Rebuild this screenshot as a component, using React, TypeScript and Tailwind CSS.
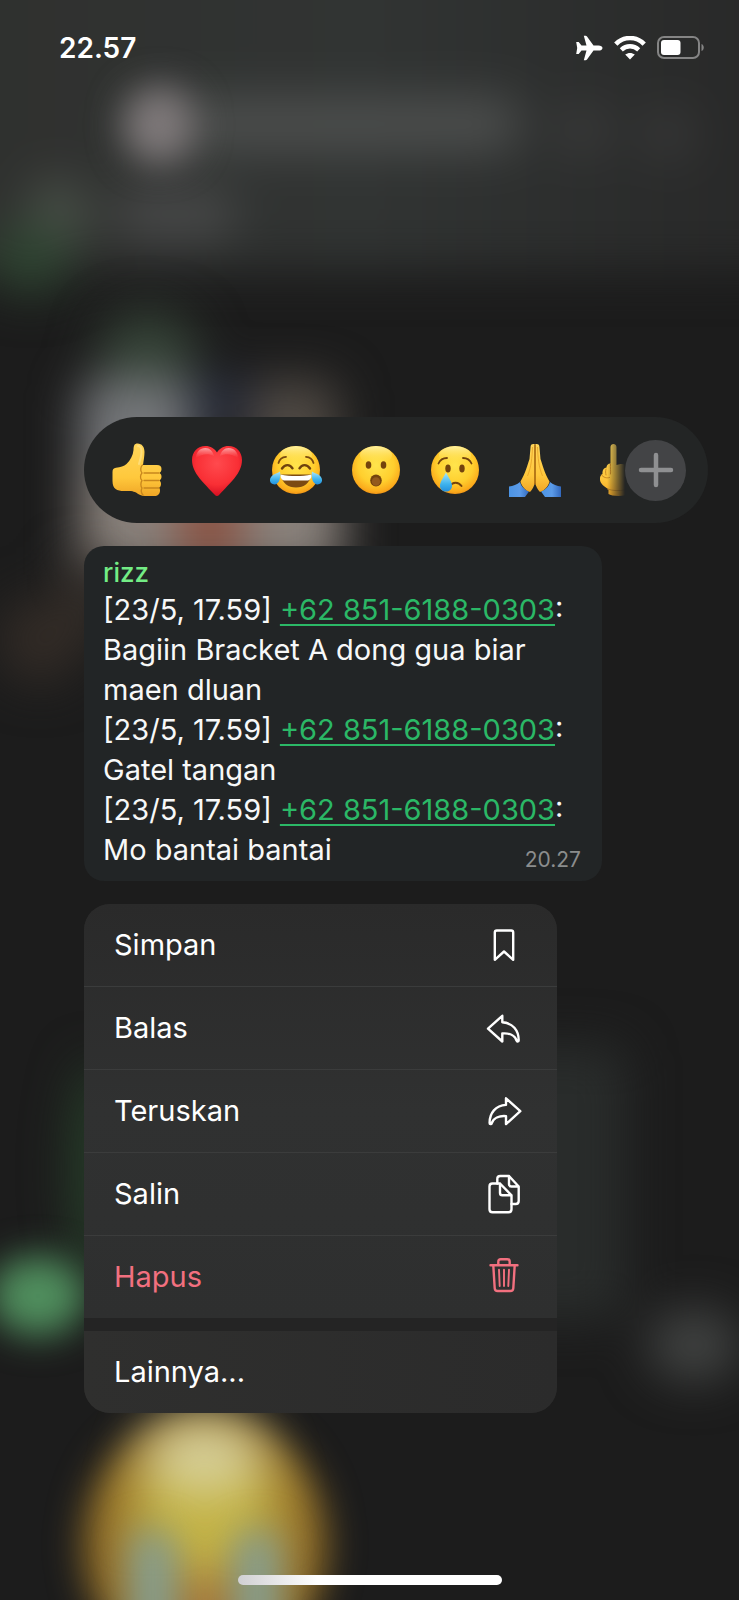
import React from "react";

type IconProps = { children: React.ReactNode };

function Backdrop() {
  return (
    <svg
      aria-hidden="true"
      className="absolute inset-0 -z-10 h-full w-full"
      viewBox="0 0 739 1600"
      preserveAspectRatio="xMidYMin slice"
    >
      <defs>
        <linearGradient id="header" x1="0" x2="1" y1="0" y2="0">
          <stop offset="0" stopColor="#2f302e" />
          <stop offset="0.5" stopColor="#313433" />
          <stop offset="1" stopColor="#272727" />
        </linearGradient>
        <filter id="soft" x="-150%" y="-150%" width="400%" height="400%" colorInterpolationFilters="sRGB">
          <feGaussianBlur stdDeviation="18" />
        </filter>
        <filter id="softer" x="-150%" y="-150%" width="400%" height="400%" colorInterpolationFilters="sRGB">
          <feGaussianBlur stdDeviation="24" />
        </filter>
      </defs>
      <rect width="739" height="1600" fill="#1c1c1c" />
      <g filter="url(#softer)">
        <rect x="-80" y="-80" width="900" height="350" fill="url(#header)" />
        <rect x="130" y="98" width="390" height="52" rx="20" fill="#4e504f" />
        <rect x="115" y="190" width="120" height="52" rx="20" fill="#484949" />
        <circle cx="583" cy="130" r="24" fill="#3d3d3d" />
        <circle cx="668" cy="134" r="24" fill="#3a3a3a" />
        <ellipse cx="58" cy="218" rx="30" ry="40" fill="#4a5149" />
        <ellipse cx="30" cy="258" rx="42" ry="36" fill="#2f4532" />
      </g>
      <ellipse cx="159" cy="125" rx="35" ry="38" fill="#807a7b" filter="url(#soft)" />
      <g filter="url(#softer)">
        <ellipse cx="148" cy="350" rx="50" ry="40" fill="#344236" />
        <rect x="80" y="378" width="112" height="182" rx="20" fill="#75777a" />
        <rect x="192" y="378" width="60" height="50" fill="#252a3a" />
        <rect x="250" y="380" width="88" height="90" rx="20" fill="#504a44" />
        <rect x="80" y="470" width="262" height="105" fill="#8a827c" />
        <rect x="180" y="495" width="60" height="62" fill="#8d4a38" />
      </g>
      <g filter="url(#softer)">
        <rect x="66" y="560" width="38" height="80" fill="#37302b" />
        <ellipse cx="40" cy="640" rx="42" ry="44" fill="#322b26" />
        <rect x="420" y="1045" width="206" height="275" rx="20" fill="#292c2b" />
        <ellipse cx="96" cy="1170" rx="24" ry="110" fill="#27402a" />
        <ellipse cx="694" cy="1345" rx="46" ry="36" fill="#424443" />
      </g>
      <ellipse cx="38" cy="1296" rx="48" ry="40" fill="#508f5e" filter="url(#soft)" />
      <g filter="url(#soft)">
        <ellipse cx="205" cy="1545" rx="121" ry="132" fill="#98732a" />
      </g>
      <g filter="url(#softer)">
        <ellipse cx="205" cy="1505" rx="72" ry="80" fill="#c4b344" />
        <ellipse cx="204" cy="1456" rx="60" ry="38" fill="#d6cf98" />
        <ellipse cx="205" cy="1620" rx="30" ry="50" fill="#a8763c" />
      </g>
      <g filter="url(#soft)">
        <rect x="130" y="1530" width="46" height="140" rx="20" fill="#859f92" />
        <rect x="234" y="1530" width="46" height="140" rx="20" fill="#859f92" />
      </g>
    </svg>
  );
}

function Emoji({ children }: IconProps) {
  return (
    <svg aria-hidden="true" className="h-[54px] w-[52px]" viewBox="0 0 52 54">
      {children}
    </svg>
  );
}

function EmojiDefs() {
  return (
    <svg aria-hidden="true" className="absolute h-0 w-0">
      <defs>
        <radialGradient id="face" cx="0.5" cy="0.4" r="0.62">
          <stop offset="0" stopColor="#ffe44d" />
          <stop offset="0.6" stopColor="#ffcf2e" />
          <stop offset="0.88" stopColor="#fbab1c" />
          <stop offset="1" stopColor="#ee8f14" />
        </radialGradient>
        <linearGradient id="shine" x1="0" x2="0" y1="0" y2="1">
          <stop offset="0" stopColor="#fff6b0" stopOpacity="0.9" />
          <stop offset="1" stopColor="#ffe14a" stopOpacity="0" />
        </linearGradient>
        <linearGradient id="hand" x1="0" x2="0" y1="0" y2="1">
          <stop offset="0" stopColor="#ffd65a" />
          <stop offset="0.65" stopColor="#ffc83c" />
          <stop offset="1" stopColor="#f0a626" />
        </linearGradient>
        <radialGradient id="heart" cx="0.5" cy="0.35" r="0.65">
          <stop offset="0" stopColor="#ff4a4e" />
          <stop offset="0.65" stopColor="#f92f35" />
          <stop offset="1" stopColor="#d60f22" />
        </radialGradient>
        <linearGradient id="gloss" x1="0" x2="0" y1="0" y2="1">
          <stop offset="0" stopColor="#ffffff" stopOpacity="0.75" />
          <stop offset="1" stopColor="#ff8a8a" stopOpacity="0" />
        </linearGradient>
        <linearGradient id="tear" x1="0" x2="0" y1="0" y2="1">
          <stop offset="0" stopColor="#a9e6fb" />
          <stop offset="0.6" stopColor="#3fb4ee" />
          <stop offset="1" stopColor="#2490dc" />
        </linearGradient>
        <linearGradient id="sleeve" x1="0" x2="1" y1="0" y2="0">
          <stop offset="0" stopColor="#4c94e4" />
          <stop offset="0.55" stopColor="#5b9be8" />
          <stop offset="1" stopColor="#3268bd" />
        </linearGradient>
      </defs>
    </svg>
  );
}

function Face() {
  return (
    <>
      <circle cx="26" cy="27" r="24" fill="url(#face)" />
      <ellipse cx="26" cy="12" rx="16" ry="9" fill="url(#shine)" />
    </>
  );
}

function ThumbsUp() {
  return (
    <Emoji>
      <path
        d="M1.500 29c0-2.500 1-4 3.500-4.300c4.500-.5 8-1.200 10.500-3.700c4-4 6.500-8.500 7-14c.1-4.500 1-6.500 4-6.500c4.500 0 7 3.500 7 8.500c0 4.500-1 9-1.500 13H46c3 0 4.500 1.500 4.500 4c0 2-.8 3.300-2 4c1.400.8 2 2 2 3.800c0 1.800-.8 3-2 3.700c1 .8 1.500 2 1.500 3.500c0 2-.8 3.200-2 3.800c.8.700 1 1.500 1 2.700c0 3.500-2 5.500-6 5.500H34c-4 0-6-1.500-9-3.500c-3-1.500-6-1.500-12-1.500C6 48 1.500 46 1.500 38z"
        fill="url(#hand)"
      />
      <path
        d="M31.500 22c-2 1.500-2.500 6-.5 8M31 30c-2 2-2 6 0 7.500M31 37.500c-1.500 2-1.500 6 0 7.500M31 45c-1 2-.8 5 1 7M33 30h15M33 37.500h15M33 45h15"
        fill="none"
        stroke="#c8861d"
        strokeWidth="1.300"
        strokeLinecap="round"
      />
      <path d="M27 3c2.500 0 3.500 2.500 3.500 6c0 4-1.500 8-2.500 12" fill="none" stroke="#ffe48c" strokeWidth="2" strokeLinecap="round" opacity="0.7" />
    </Emoji>
  );
}

function Heart() {
  return (
    <Emoji>
      <path
        d="M26 9.500C23.500 5.500 19.500 3 14.500 3C6.500 3 1 9 1 17c0 13.500 12.500 23.500 22.500 34.500c1.800 2 3.200 2 5 0C38.500 40.500 51 30.500 51 17C51 9 45.500 3 37.500 3C32.500 3 28.500 5.500 26 9.500z"
        fill="url(#heart)"
      />
      <path d="M5 15c0-6 4-10 9.500-10c4 0 7.500 3 8.500 8c-6-3-12-2-18 2zM29 13c1-5 4.500-8 8.500-8C43 5 47 9 47 15c-6-4-12-5-18-2z" fill="url(#gloss)" opacity="0.75" />
    </Emoji>
  );
}

function Joy() {
  return (
    <Emoji>
      <Face />
      <path d="M8.500 20c1-4 4-6 7.500-6.200M43.500 20c-1-4-4-6-7.500-6.200" fill="none" stroke="#7a4a10" strokeWidth="1.800" strokeLinecap="round" />
      <path d="M12 25.500c3-4.500 8-4.500 10.500-.2M29.500 25.300c2.500-4.300 7.500-4.300 10.500.2" fill="none" stroke="#6e420e" strokeWidth="2.400" strokeLinecap="round" />
      <path d="M10.500 31.500h31C40 40 34 44.500 26 44.500S12 40 10.500 31.500z" fill="#7c4a12" />
      <path d="M10.500 31.500c10 2 21 2 31 0c.3 4-2 6-4.500 6H15c-2.500 0-4.800-2-4.500-6z" fill="#fff" />
      <path d="M10 28.500c1 5.500-.5 13-5.500 13c-5.500 0-6-6.500-1.500-9.500c2.500-1.700 5-2 7-3.500zM42 28.500c-1 5.500.5 13 5.500 13c5.500 0 6-6.500 1.500-9.500c-2.500-1.700-5-2-7-3.500z" fill="url(#tear)" />
    </Emoji>
  );
}

function Wow() {
  return (
    <Emoji>
      <Face />
      <ellipse cx="18.500" cy="22" rx="2.800" ry="3.800" fill="#73430d" />
      <ellipse cx="33.500" cy="22" rx="2.800" ry="3.800" fill="#73430d" />
      <ellipse cx="26" cy="37.500" rx="5.800" ry="6" fill="#73430d" />
      <ellipse cx="26" cy="38.500" rx="4.200" ry="4.300" fill="#935a1d" />
    </Emoji>
  );
}

function Sad() {
  return (
    <Emoji>
      <Face />
      <path d="M9.500 20.500c1.500-3.500 4.500-5.500 8.500-5.500M34 15c4 0 7 2 8.500 5.500" fill="none" stroke="#73430d" strokeWidth="1.800" strokeLinecap="round" />
      <ellipse cx="19" cy="25.500" rx="2.700" ry="4" fill="#73430d" />
      <ellipse cx="33" cy="25.500" rx="2.700" ry="4" fill="#73430d" />
      <path d="M21 43c2.500-4.500 8.500-4.500 11.500 0" fill="none" stroke="#73430d" strokeWidth="2" strokeLinecap="round" />
      <path d="M17 29.500c2.500 5 6 9 6 13.500c0 3.500-2.800 5.500-6 5.500s-6-2-6-5.500c0-4.500 3.500-8.500 6-13.500z" fill="url(#tear)" />
    </Emoji>
  );
}

function Pray() {
  return (
    <Emoji>
      <path d="M0 43.500c4-.5 8-2 11-4.500c1 4 4 7.500 9 9.500L16 54H0z" fill="url(#sleeve)" />
      <path d="M52 43.500c-4-.5-8-2-11-4.500c-1 4-4 7.500-9 9.500l4 5.500h16z" fill="url(#sleeve)" />
      <path
        d="M26 1.500C24 .5 22 1 21.600 3.500L20.500 16c-2 6-4 14-9 22.500c1 5 5 9 9.500 10.500c2.500-2.500 4-5.500 5-9.500c1 4 2.500 7 5 9.500c4.500-1.500 8.500-5.500 9.500-10.500c-5-8.500-7-16.500-9-22.500L30.400 3.500C30 1 28 .5 26 1.500z"
        fill="url(#hand)"
      />
      <path d="M26 2v39" stroke="#a5660f" strokeWidth="1.600" strokeLinecap="round" />
      <path d="M23.500 4c-.5 11-1 19-5 29M28.500 4c.5 11 1 19 5 29" fill="none" stroke="#e39a1f" strokeWidth="1" opacity="0.7" />
    </Emoji>
  );
}

function MiddleFinger() {
  return (
    <Emoji>
      <path
        d="M22.500 4c0-4 6-4 6 0v18l4-1c4-.5 7 1 8 4c3 0 5 2 5 5v6c0 6-3 9-5 12v3c-3 2.500-17 2.500-20 0v-5c-4-2-8-5-8.500-9c-.2-3 .5-5 2.500-6c-.5-4 1.500-6 4-6.500c0-2 1.500-4 4-4z"
        fill="url(#hand)"
      />
      <path d="M22.500 21c-.5 4 .5 7 0 10M18 26c-.5 2-.5 4 0 6M13.500 32c2 2.500 5 3.500 8 2.500M19.500 46c5 2 12 2 17 1" fill="none" stroke="#c88a22" strokeWidth="1" strokeLinecap="round" />
    </Emoji>
  );
}

function MenuIcon({ children }: IconProps) {
  return (
    <svg
      aria-hidden="true"
      className="h-10 w-10"
      viewBox="0 0 40 40"
      fill="none"
      stroke="currentColor"
      strokeWidth="2.400"
      strokeLinecap="round"
      strokeLinejoin="round"
    >
      {children}
    </svg>
  );
}

const bookmark = <path d="M10.800 34.800V7.500c0-1.200.9-2 2-2h14.400c1.100 0 2 .8 2 2v27.300L20 26.500z" />;

const reply = <path d="M18.300 7.800L4 20.700l14.300 12.800v-8c7-.6 12.500 2 14.200 7c.4 1.400 2.200 1.300 2.200-.2c0-10-6-17.300-16.400-18z" />;

const forward = <path d="M22 7.300l14.300 12.900L22 33.100v-8c-7-.6-12.500 2-14.200 7c-.4 1.400-2.200 1.300-2.200-.2c0-10 6-17.300 16.400-18z" />;

const copy = (
  <>
    <path d="M16 9.500H8.500c-1.900 0-3 1.100-3 3v22.700c0 1.900 1.100 3 3 3h16c1.900 0 3-1.100 3-3V21.300zV19c0 1.500.8 2.300 2.300 2.300h9.200" />
    <path d="M13.300 9.500V5c0-1.900 1.100-3 3-3H25l9.700 10.500V27c0 1.900-1.100 3-3 3h-4.200M25 2v8.200c0 1.500.8 2.300 2.300 2.300h7.400" />
  </>
);

const trash = (
  <>
    <path d="M6.500 8.300h27M14.300 8V4.700c0-1.500 1-2.500 2.500-2.500h6.400c1.500 0 2.500 1 2.500 2.500V8" />
    <path d="M9.300 8.500l1.400 22.700c.1 1.800 1.200 2.800 3 2.800h12.600c1.800 0 2.900-1 3-2.800l1.400-22.700" />
    <path d="M15 12.800l.7 16.200M20 12.800V29M25 12.800L24.300 29" strokeWidth="1.900" />
  </>
);

const reactions = [
  { label: "Suka", art: <ThumbsUp /> },
  { label: "Hati", art: <Heart /> },
  { label: "Tertawa", art: <Joy /> },
  { label: "Kaget", art: <Wow /> },
  { label: "Sedih", art: <Sad /> },
  { label: "Terima kasih", art: <Pray /> },
  { label: "Jari tengah", art: <MiddleFinger /> },
];

const actions = [
  { label: "Simpan", icon: bookmark, tone: "text-white" },
  { label: "Balas", icon: reply, tone: "text-white" },
  { label: "Teruskan", icon: forward, tone: "text-white" },
  { label: "Salin", icon: copy, tone: "text-white" },
  { label: "Hapus", icon: trash, tone: "text-[#f2707f]" },
];

const messages = ["Bagiin Bracket A dong gua biar maen dluan", "Gatel tangan", "Mo bantai bantai"];

function StatusBar() {
  return (
    <header className="flex h-[95px] items-center justify-between pr-[34px] pl-[59px] text-white">
      <time className="text-[28px] leading-[32px] font-semibold">22.57</time>
      <div className="flex items-center gap-[11px]">
        <svg aria-label="Mode pesawat" role="img" className="h-[26px] w-[28px]" viewBox="0 0 28 26">
          <path
            d="M27.500 13c0 1.700-1.800 2.600-4 2.600h-5l-6.500 9c-.4.500-.8.700-1.300.7H8.800L11.500 15.600H6.500l-2.800 3.400H1.200L2.200 13L1.200 7h2.500l2.800 3.400h5L8.800.7h1.900c.5 0 .9.200 1.300.7l6.500 9h5c2.200 0 4 .9 4 2.600z"
            fill="currentColor"
          />
        </svg>
        <svg aria-label="Wi-Fi" role="img" className="h-[24px] w-[32px]" viewBox="0 0 32 24">
          <path d="M1.800 8.200c8-8.200 20.400-8.200 28.400 0" fill="none" stroke="currentColor" strokeWidth="4.600" />
          <path d="M7.300 13.800c5-4.800 12.400-4.800 17.400 0" fill="none" stroke="currentColor" strokeWidth="4.400" />
          <path d="M16 23.500l-4.800-4.900c2.800-2.300 6.800-2.300 9.600 0z" fill="currentColor" />
        </svg>
        <svg aria-label="Baterai" role="img" className="h-[24px] w-[48px]" viewBox="0 0 48 24">
          <rect x="1" y="1" width="41" height="21" rx="6" fill="none" stroke="#858585" strokeWidth="2" />
          <path d="M44.500 8c3 1 3 6 0 7z" fill="#858585" />
          <rect x="4" y="4" width="19.500" height="15" rx="3" fill="currentColor" />
        </svg>
      </div>
    </header>
  );
}

function ReactionBar() {
  return (
    <section aria-label="Reaksi" className="mr-[31px] flex h-[106px] items-center rounded-full bg-[#232525] pr-[22px] pl-[27px]">
      <div className="min-w-0 flex-1 overflow-hidden [mask-image:linear-gradient(to_right,black_calc(100%-18px),transparent)]">
        <div className="flex w-[529px] justify-between">
          {reactions.map((r) => (
            <button key={r.label} type="button" aria-label={r.label}>
              {r.art}
            </button>
          ))}
        </div>
      </div>
      <button type="button" aria-label="Tambah reaksi" className="flex h-[61px] w-[61px] shrink-0 items-center justify-center rounded-full bg-[#434446] text-[#8f9092]">
        <svg aria-hidden="true" className="h-[36px] w-[36px]" viewBox="0 0 36 36" fill="none" stroke="currentColor" strokeWidth="4.500" strokeLinecap="round">
          <path d="M18 3v30M3 18h30" />
        </svg>
      </button>
    </section>
  );
}

function MessageBubble() {
  return (
    <article className="relative w-[518px] max-w-full rounded-[20px] bg-[#222526] px-[19px] pt-[9px] pb-[11px] text-[29px] leading-[40px] text-[#f7f8f8]">
      <h2 className="text-[26px] leading-[35px] font-medium text-[#73ec85]">rizz</h2>
      {messages.map((text) => (
        <p key={text}>
          [23/5, 17.59]{" "}
          <a href="tel:+6285161880303" className="whitespace-nowrap text-[#2bb866] underline decoration-2 underline-offset-[4px]">
            +62 851-6188-0303
          </a>
          :<br />
          {text}
        </p>
      ))}
      <time className="absolute right-[21px] bottom-[7px] text-[21px] leading-[28px] text-[#8b8d8d]">20.27</time>
    </article>
  );
}

function ActionMenu() {
  return (
    <nav aria-label="Tindakan pesan" className="w-[473px] max-w-full overflow-hidden rounded-[26px] bg-[#242424] text-[29px] leading-[40px]">
      <ul className="divide-y divide-[#3b3c3c] bg-linear-to-b from-[#2a2a2a] via-[#303131] to-[#2e2f2f]">
        {actions.map((a) => (
          <li key={a.label}>
            <button type="button" className={"flex h-[82px] w-full items-center justify-between pr-[33px] pl-[30px] " + a.tone}>
              <span>{a.label}</span>
              <MenuIcon>{a.icon}</MenuIcon>
            </button>
          </li>
        ))}
      </ul>
      <button type="button" className="mt-[13px] flex h-[82px] w-full items-center bg-linear-to-r from-[#2f2f2e] to-[#2b2b2b] pl-[30px] text-white">
        Lainnya...
      </button>
    </nav>
  );
}

export default function App() {
  return (
    <div className="relative isolate flex min-h-screen flex-col overflow-hidden bg-[#1c1c1c] font-['Inter','Liberation_Sans',sans-serif]">
      <Backdrop />
      <EmojiDefs />
      <StatusBar />
      <main className="flex flex-col gap-[23px] pt-[322px] pl-[84px]">
        <ReactionBar />
        <MessageBubble />
        <ActionMenu />
      </main>
      <footer className="mt-auto flex justify-center pt-6 pb-[15px]">
        <div className="h-[10px] w-[264px] rounded-full bg-linear-to-r from-[#d0d0d3] via-white via-30% to-white" />
      </footer>
    </div>
  );
}
